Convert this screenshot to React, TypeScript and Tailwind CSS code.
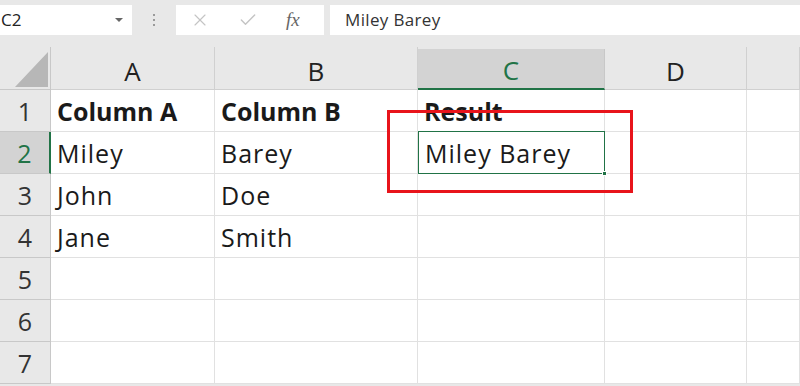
import { X, Check } from "lucide-react";

const cols = ["A", "B", "C", "D", ""];
const rows: string[][] = [
    ["Column A", "Column B", "Result", "", ""],
    ["Miley", "Barey", "Miley Barey", "", ""],
    ["John", "Doe", "", "", ""],
    ["Jane", "Smith", "", "", ""],
    ["", "", "", "", ""],
    ["", "", "", "", ""],
    ["", "", "", "", ""],
];

const font = { fontFamily: '"Open Sans", "Noto Sans", sans-serif' };

export default function App() {
    return (
        <div
            className="w-[800px] h-[386px] overflow-hidden bg-[#e8e8e8] flex flex-col"
            style={font}
        >
            {/* Formula bar */}
            <div className="flex items-center h-[30px] mt-[5px] text-[17px]">
                <div className="w-[132px] h-full bg-white flex items-center justify-between pl-[1px] pr-[9px] text-[#222]">
                    <span>C2</span>
                    <span className="w-0 h-0 border-l-[4px] border-r-[4px] border-t-[4px] border-l-transparent border-r-transparent border-t-[#666]" />
                </div>
                <div className="w-[44px] flex flex-col items-center gap-[3px]">
                    <span className="w-[2px] h-[2px] bg-[#9a9a9a]" />
                    <span className="w-[2px] h-[2px] bg-[#9a9a9a]" />
                    <span className="w-[2px] h-[2px] bg-[#9a9a9a]" />
                </div>
                <div className="w-[148px] h-full bg-white flex items-center">
                    <X className="ml-[14px] w-[20px] h-[20px] text-[#c4c4c4]" strokeWidth={1.4} />
                    <Check className="ml-[28px] w-[20px] h-[20px] text-[#c4c4c4]" strokeWidth={1.7} />
                    <span
                        className="ml-[28px] italic text-[#666] text-[19px]"
                        style={{ fontFamily: '"Liberation Serif", serif' }}
                    >
                        fx
                    </span>
                </div>
                <div className="ml-[6px] flex-1 h-full bg-white flex items-center pl-[15px] text-[#333] tracking-[0.02em]">
                    Miley Barey
                </div>
            </div>

            {/* Sheet */}
            <div className="relative mt-[12px] grid grid-cols-[51px_164px_203px_187px_142px_1fr] grid-rows-[43px_repeat(7,42px)]">
                {/* corner */}
                <div className="bg-[#e8e8e8] border-r border-b border-[#c8c8c8]">
                    <svg width="33" height="35" className="absolute left-[15px] top-[5px]">
                        <polygon points="33,0 33,35 0,35" fill="#b7b7b7" />
                    </svg>
                </div>
                {cols.map((c, i) => (
                    <div
                        key={"h" + i}
                        className={
                            c === "C"
                                ? "bg-[#d3d3d3] border-r border-[#c8c8c8] border-b-2 border-b-[#217346] flex items-center justify-center pt-[4px] text-[26px] text-[#217346] mt-[2px]"
                                : "bg-[#e8e8e8] border-r border-b border-[#d0d0d0] flex items-center justify-center pt-[6px] text-[26px] text-[#222]"
                        }
                    >
                        {c}
                    </div>
                ))}
                {rows.map((r, ri) => (
                    <Row key={ri} idx={ri + 1} cells={r} />
                ))}

                {/* red highlight box */}
                <div className="absolute left-[387px] top-[63px] w-[246px] h-[83px] border-[3px] border-[#e8141b]" />
            </div>
        </div>
    );
}

function Row({ idx, cells }: { idx: number; cells: string[] }) {
    const active = idx === 2;
    return (
        <>
            <div
                className={
                    active
                        ? "bg-[#d3d3d3] border-r-2 border-r-[#217346] border-b border-b-[#c8c8c8] flex items-center justify-center pt-[2px] text-[25px] text-[#217346]"
                        : "bg-[#e8e8e8] border-r border-b border-[#c8c8c8] flex items-center justify-center pt-[2px] text-[25px] text-[#333]"
                }
            >
                {idx}
            </div>
            {cells.map((v, ci) => {
                const sel = active && ci === 2;
                return (
                    <div
                        key={ci}
                        className={
                            sel
                                ? "relative bg-white border border-[#217346] -mt-[1px] flex items-end pl-[6px] pb-[1px] text-[25px] tracking-[0.04em] text-[#1a1a1a]"
                                : "bg-white border-r border-b border-[#e1e1e1] flex items-end pl-[6px] pb-[1px] text-[25px] tracking-[0.04em] text-[#1a1a1a]"
                        }
                    >
                        <span className={idx === 1 ? "font-bold tracking-normal" : ""}>{v}</span>
                        {sel && (
                            <span className="absolute -right-[3px] -bottom-[3px] w-[5px] h-[5px] bg-[#217346] border border-white" />
                        )}
                    </div>
                );
            })}
        </>
    );
}
